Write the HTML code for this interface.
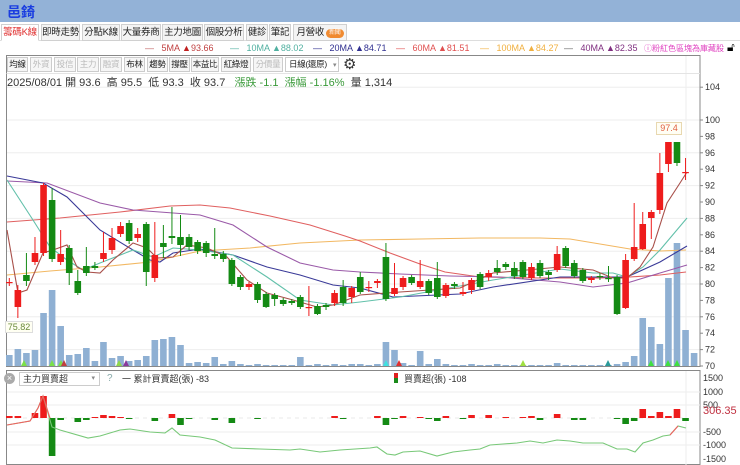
<!DOCTYPE html>
<html><head><meta charset="utf-8">
<style>
*{margin:0;padding:0;box-sizing:border-box}
body{width:740px;height:465px;overflow:hidden;background:#fff;font-family:"Liberation Sans","Noto Sans CJK TC",sans-serif;position:relative}
.title{position:absolute;left:0;top:0;width:740px;height:22px;background:#93b2d7;}
.title span{position:absolute;left:7px;top:2px;font-size:14px;font-weight:bold;color:#1a3de0}
.tabs{position:absolute;left:0;top:24px;height:17px;width:740px;border-bottom:1px solid #ddd}
.tab{position:absolute;top:0;height:17px;border:1px solid #d0d0d0;background:#f4f4f4;font-size:9.5px;line-height:15px;text-align:center;color:#222;white-space:nowrap;overflow:hidden;letter-spacing:-0.3px}
.tab.a{background:#fff;color:#e03030;border-bottom-color:#fff}
.badge{display:inline-block;background:#f08a30;color:#fff;font-size:6px;line-height:9px;border-radius:5px;padding:0 3px;vertical-align:1px;margin-left:2px}
.leg{position:absolute;top:43px;font-size:9px;white-space:nowrap}
.tb{position:absolute;top:57px;height:15px;border:1px solid #ccc;background:#f6f6f6;font-size:8.5px;line-height:13px;text-align:center;color:#222;white-space:nowrap;overflow:hidden;letter-spacing:-0.3px}
.tb.g{color:#bbb}
.info{position:absolute;left:7px;top:74px;font-size:11px;color:#333;white-space:nowrap}
</style></head><body>
<div class="title"><span>邑錡</span></div>
<div class="tabs">
<div class="tab a" style="left:1px;width:38px">籌碼K線</div>
<div class="tab" style="left:41px;width:39px">即時走勢</div>
<div class="tab" style="left:82px;width:38px">分點K線</div>
<div class="tab" style="left:121px;width:40px">大量券商</div>
<div class="tab" style="left:162px;width:41px">主力地圖</div>
<div class="tab" style="left:204px;width:40px">個股分析</div>
<div class="tab" style="left:246px;width:22px">健診</div>
<div class="tab" style="left:269px;width:22px">筆記</div>
<div class="tab" style="left:293px;width:54px">月營收<span class="badge">新聞</span></div>
</div>
<div class="leg" style="left:145px;color:#c04040"><span style="color:#c06060">—</span>&nbsp;&nbsp;&nbsp;5MA <span style="color:#c02020">▲</span>93.66</div>
<div class="leg" style="left:230px;color:#50b0a0"><span>—</span>&nbsp;&nbsp;&nbsp;10MA ▲88.02</div>
<div class="leg" style="left:313px;color:#303090"><span>—</span>&nbsp;&nbsp;&nbsp;20MA ▲84.71</div>
<div class="leg" style="left:396px;color:#e05050"><span>—</span>&nbsp;&nbsp;&nbsp;60MA ▲81.51</div>
<div class="leg" style="left:480px;color:#f0b040"><span>—</span>&nbsp;&nbsp;&nbsp;100MA ▲84.27</div>
<div class="leg" style="left:564px;color:#803080"><span style="color:#666">—</span>&nbsp;&nbsp;&nbsp;40MA ▲82.35</div>
<div class="leg" style="left:644px;color:#e040c0;font-size:8px;top:43px">ⓘ粉紅色區塊為庫藏股</div>
<div class="leg" style="left:727px;top:40px;font-size:12px;color:#000">🔓︎</div>

<div class="tb" style="left:7px;width:21px">均線</div>
<div class="tb g" style="left:30px;width:22px">外資</div>
<div class="tb g" style="left:54px;width:22px">投信</div>
<div class="tb g" style="left:77px;width:22px">主力</div>
<div class="tb g" style="left:100px;width:22px">融資</div>
<div class="tb" style="left:124px;width:21px">布林</div>
<div class="tb" style="left:147px;width:21px">趨勢</div>
<div class="tb" style="left:169px;width:21px">撐壓</div>
<div class="tb" style="left:191px;width:28px">本益比</div>
<div class="tb" style="left:221px;width:30px">紅綠燈</div>
<div class="tb g" style="left:253px;width:30px">分價量</div>
<div class="tb" style="left:285px;width:54px;background:#fff;text-align:left;padding-left:3px">日線(還原) <span style="color:#888;font-size:7px;margin-left:4px">▾</span></div>
<div style="position:absolute;left:343px;top:55px;font-size:15px;color:#333">⚙</div>
<div class="info">2025/08/01 開 93.6 &nbsp;高 95.5 &nbsp;低 93.3 &nbsp;收 93.7 &nbsp;&nbsp;<span style="color:#3a9a3a">漲跌 -1.1 &nbsp;漲幅 -1.16%</span> &nbsp;量 1,314</div>

<svg id="s" width="740" height="465" style="position:absolute;left:0;top:0" xmlns="http://www.w3.org/2000/svg"></svg>

<div style="position:absolute;left:5px;top:321px;width:28px;height:12px;border:1px solid #ddd;background:#fffff2;font-size:9px;line-height:10px;color:#6a8a3a;text-align:center">75.82</div>
<div style="position:absolute;left:656px;top:122px;width:26px;height:13px;border:1px solid #e8d8b0;background:#fffef4;font-size:9px;line-height:11px;color:#e06040;text-align:center">97.4</div>

<div style="position:absolute;left:4px;top:373px;width:11px;height:11px;border-radius:50%;background:#aaa;color:#fff;font-size:9px;line-height:11px;text-align:center">×</div>
<div style="position:absolute;left:19px;top:372px;width:81px;height:14px;border:1px solid #ccc;font-size:9px;line-height:12px;padding-left:3px;color:#333">主力買賣超<span style="position:absolute;right:4px;color:#888;font-size:7px">▾</span></div>
<div style="position:absolute;left:107px;top:373px;font-size:10px;color:#8aa">?</div>
<div style="position:absolute;left:122px;top:372px;font-size:9px;color:#333">一 累計買賣超(張) -83</div>
<div style="position:absolute;left:394px;top:373px;width:4px;height:5px;background:#e02020"></div>
<div style="position:absolute;left:394px;top:378px;width:4px;height:5px;background:#1a8a1a"></div>
<div style="position:absolute;left:404px;top:372px;font-size:9px;color:#333">買賣超(張) -108</div>
<div style="position:absolute;left:703px;top:405px;font-size:11px;color:#c03040">306.35</div>

<script>
var s='';
function Y(p){return 366-8.2*(p-70);}
for(var p=72;p<=104;p+=4){s+='<line x1="7" x2="700" y1="'+Y(p)+'" y2="'+Y(p)+'" stroke="#eee"/>';}
s+='<line x1="686" x2="686" y1="56" y2="366" stroke="#eee"/>';
s+='<rect x="6.5" y="55.5" width="693.5" height="311" fill="none" stroke="#888"/>';
s+='<line x1="6.5" x2="700" y1="73.5" y2="73.5" stroke="#e4e4e4"/>';
var labs=[104,100,98,96,94,92,90,88,86,84,82,80,78,76,74,72,70];
labs.forEach(function(p){var y=Y(p);s+='<line x1="700" x2="703" y1="'+y+'" y2="'+y+'" stroke="#888"/><text x="705" y="'+(y+3)+'" font-size="9" fill="#333" font-family="Liberation Sans">'+p+'</text>';});
var vol=[355,349,353,350,313,290,326,355,354,348,361,342,358,356,361,360,356,340,339,337,345,363,362,363,357,364,361,364,365,364,365,365,365,365,357,365,364,365,364,365,364,364,365,364,342,350,363,365,351,364,359,364,365,365,364,365,365,364,365,365,365,365,365,365,363,365,365,365,365,365,365,364,362,356,318,327,344,278,243,330,353];
function X(i){return 9.3+i*8.56;}
vol.forEach(function(v,i){s+='<rect x="'+(X(i)-3.3)+'" y="'+v+'" width="6.6" height="'+(366-v)+'" fill="#8fb0d3"/>';});
[[24,'#7be04a'],[52,'#7be04a'],[61,'#7be04a'],[64,'#c04040'],[119,'#8fd84a'],[126,'#8a3a9a'],[386,'#40e0e0'],[399,'#e03030'],[523,'#a0e040'],[608,'#2a9a9a'],[651,'#40e040'],[668,'#40e040'],[677,'#40e040']].forEach(function(m){s+='<polygon points="'+(m[0]-3)+',366 '+(m[0]+3)+',366 '+m[0]+',360" fill="'+m[1]+'"/>';});
function pl(pts,c){s+='<polyline fill="none" stroke="'+c+'" stroke-width="1.1" points="'+pts+'"/>';}
pl('7,275 50,271 100,267 150,262 200,251 250,248 300,243 360,240 420,239 480,238 540,238 570,239 600,244 630,249 660,251 686,250','#f2b862');
pl('7,222 60,218 120,212 170,206 200,205 230,208 270,216 310,225 345,236 360,241 390,253 420,264 445,272 480,277 540,278 600,278 630,277 660,275 686,272','#e06060');
pl('7,181 47,183 100,203 133,210 200,215 233,225 267,247 300,263 333,270 360,272 400,274 450,276 500,277 560,282 593,287 627,283 660,273 687,265','#9a5aa8');
pl('7,176 43,183 67,197 100,230 133,250 150,260 160,262 173,253 200,249 233,255 267,267 300,275 333,285 360,288 393,297 460,294 493,287 560,277 610,277 627,277 660,262 687,246','#3a3a98');
pl('7,180 33,220 50,247 67,260 83,270 100,263 133,250 153,257 173,248 200,250 233,255 267,277 300,300 333,305 360,302 400,297 427,292 493,280 560,269 593,273 613,273 627,277 643,267 660,250 687,218','#62c0aa');
pl('7,230 18,293 27,290 43,253 53,250 67,245 77,267 87,272 100,273 113,260 133,243 147,248 157,258 173,257 187,245 207,248 227,257 247,280 267,293 293,300 317,307 333,305 360,295 400,292 460,288 493,273 527,270 560,267 593,270 613,278 627,278 640,267 653,247 667,203 680,183 687,172','#a8504a');
var R='#ee1c1c',G='#148a14';
var c=[[282,283,R,278,286],[290,307,R,285,318],[275,281,G,253,286],[253,262,R,237,265],[185,253,R,183,256],[200,259,G,188,262],[254,262,R,230,265],[248,273,G,245,285],[281,293,G,270,295],[266,273,G,247,276],[266,268,G,262,270],[253,259,R,232,262],[238,250,R,228,254],[226,234,R,222,237],[223,241,G,220,244],[234,238,R,228,242],[224,272,G,222,286],[255,278,R,222,282],[243,247,G,225,258],[236,238,G,207,244],[237,245,G,215,256],[237,247,G,234,250],[242,251,G,240,254],[243,253,G,241,257],[254,256,G,228,259],[254,259,G,251,262],[260,284,G,258,286],[277,287,G,275,290],[284,287,R,282,290],[284,300,G,282,303],[294,307,G,292,308],[295,299,G,293,306],[300,304,G,298,306],[301,303,G,299,305],[297,307,G,295,309],[307,308,R,286,316],[306,314,G,304,315],[305,307,G,303,310],[293,303,R,290,306],[287,303,G,280,306],[288,297,R,286,303],[277,292,G,272,294],[287,288,R,281,292],[281,283,R,279,288],[257,299,G,243,301],[288,294,R,263,296],[278,287,R,276,290],[277,283,G,275,285],[281,287,R,260,289],[281,293,G,279,295],[278,297,G,262,299],[285,296,R,283,298],[284,286,G,282,289],[292,294,R,282,296],[280,290,R,278,294],[274,287,G,272,289],[273,277,R,270,281],[268,272,G,260,275],[264,267,G,262,270],[268,276,G,262,279],[262,277,G,260,279],[267,278,R,263,280],[263,276,G,260,278],[272,275,G,270,280],[254,270,R,246,272],[248,266,G,246,268],[263,276,G,260,278],[270,281,G,268,283],[278,280,R,276,283],[276,277,G,273,280],[278,279,G,266,282],[277,314,G,275,315],[260,308,R,254,309],[247,259,R,203,261],[224,249,R,212,250],[212,218,R,210,239],[173,210,R,153,214],[142,164,R,142,172],[142,163,G,142,166],[172,173,R,158,180]];
c.forEach(function(k,i){var x=X(i);s+='<line x1="'+x+'" x2="'+x+'" y1="'+k[3]+'" y2="'+k[4]+'" stroke="'+k[2]+'"/>';s+='<rect x="'+(x-3.3)+'" y="'+k[0]+'" width="6.6" height="'+Math.max(1.2,k[1]-k[0])+'" fill="'+k[2]+'"/>';});
s+='<rect x="6.5" y="370.5" width="693.5" height="94" fill="none" stroke="#888"/>';
[392,405,432,445].forEach(function(y){s+='<line x1="7" x2="700" y1="'+y+'" y2="'+y+'" stroke="#eee"/>';});
s+='<line x1="686" x2="686" y1="371" y2="465" stroke="#eee"/>';
[[1500,378],[1000,392],[500,405],[-500,432],[-1000,445],[-1500,459]].forEach(function(a){s+='<text x="703" y="'+(a[1]+3)+'" font-size="9" fill="#333" font-family="Liberation Sans">'+a[0]+'</text>';});
var Z=418;
s+='<line x1="7" x2="686" y1="'+Z+'" y2="'+Z+'" stroke="#e8e8e8" stroke-dasharray="4,4"/>';
var sb=[[0,2],[1,2],[3,5],[4,22],[5,-38],[6,-2],[8,-4],[9,-2],[10,1],[11,3],[12,2],[13,1],[14,-1],[17,-3],[19,4],[20,-7],[21,-1],[24,-2],[26,-5],[29,-1],[38,2],[39,-1],[43,2],[44,-7],[45,-1],[46,2],[48,1],[49,-1],[50,-3],[51,2],[53,-1],[54,3],[56,3],[58,1],[60,1],[61,2],[62,-2],[64,4],[66,-2],[67,-2],[71,-1],[72,-6],[73,-3],[74,9],[75,2],[76,6],[77,2],[78,9],[79,-3]];
sb.forEach(function(b){var x=X(b[0]),h=b[1];var y=h>0?Z-h:Z;s+='<rect x="'+(x-3.3)+'" y="'+y+'" width="6.6" height="'+Math.abs(h)+'" fill="'+(h>0?R:G)+'"/>';});
pl('7,425 30,421 38,408 43,396 52,427 60,430 88,438 100,436 120,430 130,429 150,432 165,433 172,428 180,435 200,437 215,440 232,448 260,449 290,450 300,449 320,452 340,450 370,448 377,447 387,454 395,455 403,452 420,451 437,456 453,452 470,450 480,449 490,445 503,444 517,443 530,441 543,443 557,440 570,441 583,443 603,443 617,449 627,449 635,452 643,443 653,440 663,436 670,435 678,426 686,428','#78c878');
pl('7,425 30,421 38,408 43,396 50,418','#f06060');
pl('670,435 678,426','#f06060');
document.getElementById('s').innerHTML=s;
</script>
</body></html>
